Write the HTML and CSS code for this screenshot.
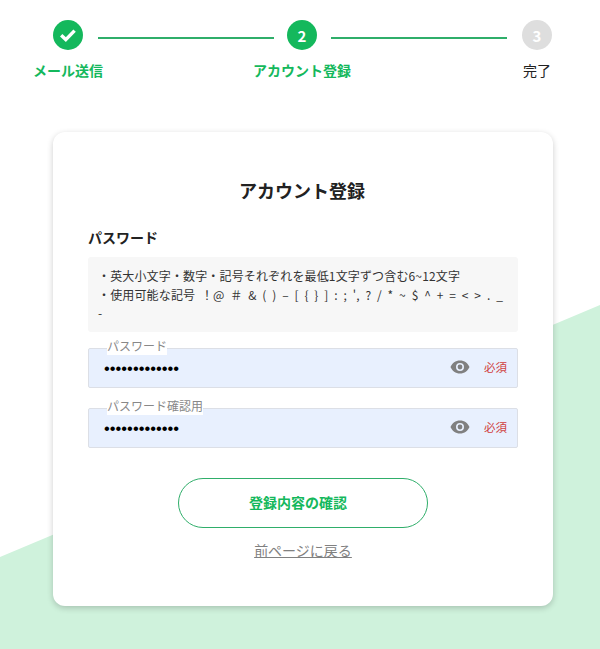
FILE: index.html
```html
<!DOCTYPE html>
<html lang="ja">
<head>
    <meta charset="UTF-8">
    <meta name="viewport" content="width=device-width, initial-scale=1.0">
    <title>アカウント登録</title>
    <link rel="stylesheet" href="styles.css">
</head>
<body>
    <div class="steps">
        <div class="step-circle done">
            <svg width="20" height="20" viewBox="0 0 20 20"><path d="M3.2 10.200 7.800 14.600 16.600 5.600" fill="none" stroke="#fff" stroke-width="3.4"/></svg>
        </div>
        <div class="step-line line-a"></div>
        <div class="step-circle done">2</div>
        <div class="step-line line-b"></div>
        <div class="step-circle todo">3</div>

        <div class="step-label col-1 active">メール送信</div>
        <div class="step-label col-3 active">アカウント登録</div>
        <div class="step-label col-5">完了</div>
    </div>

    <main class="card">
        <h1>アカウント登録</h1>
        <h2>パスワード</h2>
        <div class="note">
            ・英大小文字・数字・記号それぞれを最低1文字ずつ含む6~12文字<br>
            ・使用可能な記号&nbsp;！@ ＃ &amp; ( ) – [ { } ] : ; ', ? / * ~ $ ^ + = &lt; &gt; . _ -
        </div>

        <div class="field">
            <label class="field-label">パスワード</label>
            <input class="field-input" type="password" value="aaaaaaaaaaaaa">
            <svg class="eye" width="20" height="14" viewBox="0 0 20 14"><path fill-rule="evenodd" d="M10 .5C5.6.5 2 3.2.5 7c1.500 3.800 5.100 6.500 9.500 6.500s8-2.700 9.500-6.500C18 3.200 14.400.5 10 .5ZM10 11a4 4 0 1 1 0-8 4 4 0 0 1 0 8Zm0-6.400a2.400 2.400 0 1 0 0 4.800 2.400 2.400 0 0 0 0-4.800Z"/></svg>
            <span class="required">必須</span>
        </div>
        <div class="field">
            <label class="field-label">パスワード確認用</label>
            <input class="field-input" type="password" value="aaaaaaaaaaaaa">
            <svg class="eye" width="20" height="14" viewBox="0 0 20 14"><path fill-rule="evenodd" d="M10 .5C5.6.5 2 3.2.5 7c1.500 3.800 5.100 6.500 9.500 6.500s8-2.700 9.500-6.500C18 3.200 14.400.5 10 .5ZM10 11a4 4 0 1 1 0-8 4 4 0 0 1 0 8Zm0-6.400a2.400 2.400 0 1 0 0 4.800 2.400 2.400 0 0 0 0-4.800Z"/></svg>
            <span class="required">必須</span>
        </div>

        <button class="confirm-button">登録内容の確認</button>
        <a class="back-link" href="#">前ページに戻る</a>
    </main>
</body>
</html>
```

FILE: styles.css
```css
* {
    margin: 0;
    padding: 0;
    box-sizing: border-box;
}

html, body {
    height: 649px;
    overflow: hidden;
}

body {
    font-family: "Noto Sans CJK JP", "Noto Sans", sans-serif;
    color: #222;
    background: #fff;
    position: relative;
    padding-top: 20px;
}

/* pale green slope behind the card */
body::before {
    content: "";
    position: absolute;
    inset: 0;
    background: #cff2dc;
    clip-path: polygon(0 557px, 600px 305px, 600px 649px, 0 649px);
}

.steps {
    position: relative;
    display: grid;
    grid-template-columns: 30px 204px 30px 205px 30px;
    row-gap: 10px;
    margin-left: 53px;
}

.step-circle {
    width: 30px;
    height: 30px;
    border-radius: 50%;
    display: flex;
    align-items: center;
    justify-content: center;
    color: #fff;
    font-size: 15px;
    font-weight: 700;
}

.step-circle.done {
    background: #14b85c;
}

.step-circle.todo {
    background: #dedede;
}

.step-line {
    height: 2px;
    margin-top: 17px;
    background: #2fae6a;
}

.line-a {
    margin-left: 15px;
    margin-right: 13px;
}

.line-b {
    margin-left: 14px;
    margin-right: 15px;
}

.step-label {
    justify-self: center;
    white-space: nowrap;
    font-size: 14px;
    line-height: 20px;
}

.step-label.active {
    color: #14b85c;
    font-weight: 700;
}

.col-1 { grid-column: 1; }
.col-3 { grid-column: 3; }
.col-5 { grid-column: 5; }

.card {
    position: relative;
    display: flex;
    flex-direction: column;
    width: 500px;
    height: 474px;
    margin: 52px 0 0 53px;
    padding: 44px 35px 0;
    background: #fff;
    border-radius: 12px;
    box-shadow: 0 2px 6px rgba(0, 0, 0, 0.2);
}

h1 {
    padding-right: 2px;
    font-size: 18px;
    line-height: 28px;
    font-weight: 700;
    text-align: center;
}

h2 {
    margin-top: 22px;
    font-size: 14px;
    line-height: 22px;
    font-weight: 700;
}

.note {
    height: 75px;
    margin-top: 9px;
    padding: 10px 10px 0;
    background: #f7f7f7;
    border-radius: 3px;
    font-size: 12px;
    line-height: 18.500px;
    letter-spacing: 0.15px;
    word-spacing: 2.900px;
    color: #333;
}

.field {
    position: relative;
    height: 40px;
    margin-top: 20px;
}

.note + .field {
    margin-top: 16px;
}

.field-input {
    display: block;
    width: 100%;
    height: 100%;
    padding: 0 100px 0 15px;
    background: #e8f0fe;
    border: 1px solid #dcdfe6;
    border-radius: 2px;
    font-family: "Liberation Sans", sans-serif;
    font-size: 16.500px;
    color: #000;
    outline: none;
}

.field-label {
    position: absolute;
    top: -11px;
    left: 19px;
    font-size: 12px;
    line-height: 18px;
    color: #888;
    background: #fff;
}

.eye {
    position: absolute;
    top: 12px;
    right: 48px;
    fill: #808080;
}

.required {
    position: absolute;
    top: 10px;
    right: 11px;
    font-size: 11.500px;
    line-height: 18px;
    color: #d04040;
}

.confirm-button {
    align-self: center;
    width: 250px;
    height: 50px;
    margin-top: 30px;
    padding: 0 10px 2px 0;
    background: #fff;
    border: 1px solid #2fae6a;
    border-radius: 25px;
    font-family: inherit;
    font-size: 14px;
    font-weight: 700;
    color: #14b85c;
}

.back-link {
    align-self: center;
    margin-top: 12px;
    font-size: 14px;
    line-height: 20px;
    color: #808080;
}
```
